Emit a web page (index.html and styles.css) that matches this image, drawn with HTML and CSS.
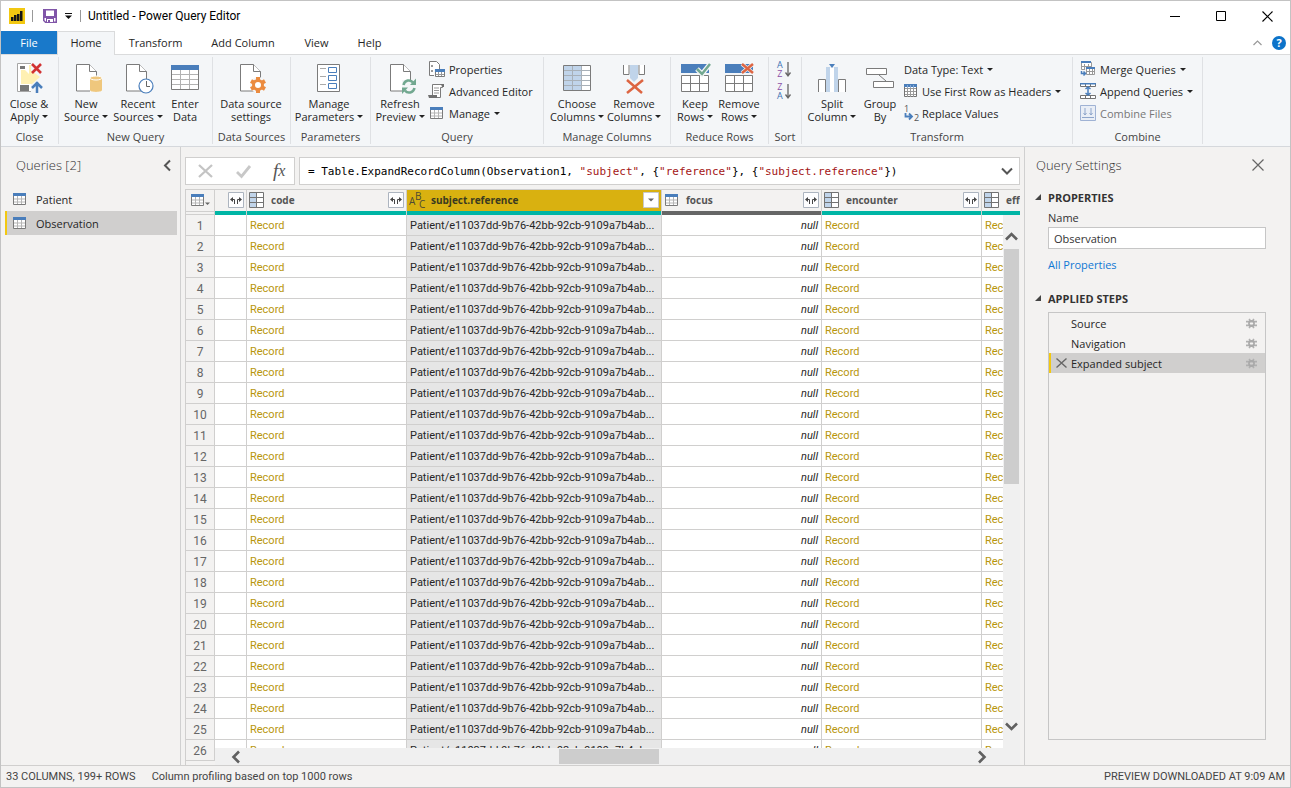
FILE: index.html
```html
<!DOCTYPE html>
<html lang="en">
<head>
<meta charset="utf-8">
<title>Untitled - Power Query Editor</title>
<link rel="stylesheet" href="styles.css">
</head>
<body>
<svg class="sprite" aria-hidden="true">
  <symbol id="page" viewBox="0 0 32 32"><path d="M6.500 2.500h13l7 7v19.500h-20z" fill="#fff" stroke="#7b7b7b"/><path d="M19.500 2.500v7h7" fill="#fff" stroke="#7b7b7b"/></symbol>
  <symbol id="table" viewBox="0 0 14 12"><path d="M.5.5h12v11H.5z" fill="#fff" stroke="#7b7b7b"/><path d="M1 6h11M1 9h11M4.500 3v8M8.500 3v8" stroke="#b5b5b5" fill="none"/><path d="M0 0h13v3H0z" fill="#4a7ebb"/></symbol>
  <symbol id="record" viewBox="0 0 16 16"><path d="M.5.500h14v15H.5z" fill="#fff"/><path d="M1 1h6v14H1z" fill="#c0d4ea"/><path d="M.5.500h14v15H.5zM7.500 0v16M0 5.500h15M0 10.500h15" stroke="#737373" fill="none"/></symbol>
  <symbol id="expand" viewBox="0 0 16 16"><path d="M.5.500h15v15H.5z" fill="#fdfdfe" stroke="#acb4bf"/><path d="M6.500 12V7.500H4M9.500 12V7.500H12" stroke="#444" fill="none"/><path d="M5 5v5L2 7.500zM11 5v5l3-2.500z" fill="#444"/></symbol>
  <symbol id="gear" viewBox="0 0 12 12"><path d="M3.500 1 5 4M8.500 1 7 4M3.500 11 5 8M8.500 11 7 8M0 4h12M0 8h12" stroke="#b0b0b0" stroke-width="1.800"/><circle cx="6" cy="6" r="2.800" fill="none" stroke="#a9a9a9" stroke-width="1.800"/></symbol>
</svg>
<div class="window">
  <header class="titlebar">
    <svg class="logo" width="16" height="16"><path d="M0 0h16v16H0z" fill="#f2c811"/><path d="M2 9h2.500v4H2zM5 7h2.500v6H5zM8 6h2.500v7H8zM11 3h2.500v10H11z" fill="#161616"/></svg>
    <span class="rule"></span>
    <button class="plain" aria-label="Save"><svg width="14" height="14"><path d="M.75.750h12.500v12.500H2.500L.75 11.500z" fill="#fff" stroke="#8055a8" stroke-width="1.500"/><path d="M1 1h2v6.500H1zM11 1h2v6.500h-2zM1 7h12v2H1zM3 9h8v5H3z" fill="#8055a8"/><path d="M4 10h6v3H4z" fill="#fff"/><path d="M5 11h2v2H5z" fill="#8055a8"/></svg></button>
    <button class="plain quick" aria-label="Customize toolbar"><svg width="7" height="6"><path d="M0 .5h7" stroke="#111"/><path d="M0 2.500h7L3.500 6z" fill="#111"/></svg></button>
    <span class="rule"></span>
    <h1>Untitled - Power Query Editor</h1>
    <div class="wincontrols">
      <button class="plain" aria-label="Minimize"><svg width="11" height="11"><path d="M0 5.500h10" stroke="#000"/></svg></button>
      <button class="plain" aria-label="Maximize"><svg width="11" height="11"><path d="M.5.500h9v9h-9z" fill="none" stroke="#000"/></svg></button>
      <button class="plain" aria-label="Close"><svg width="11" height="11"><path d="m.5.500 10 10M10.500.500l-10 10" stroke="#000" stroke-width="1.100"/></svg></button>
    </div>
  </header>
  <nav class="tabs">
    <button class="tab file">File</button><button class="tab active">Home</button><button class="tab transform">Transform</button><button class="tab add">Add Column</button><button class="tab short">View</button><button class="tab short">Help</button>
    <div class="help">
      <button class="plain" aria-label="Collapse ribbon"><svg width="9" height="6"><path d="M.5 5 4.500 1l4 4" fill="none" stroke="#999" stroke-width="1.200"/></svg></button>
      <button class="plain helpmark" aria-label="Help">?</button>
    </div>
  </nav>
  <section class="ribbon" aria-label="Home">
    <div class="group g-close"><div class="tools">
      <button class="big w56"><svg class="icon" width="32" height="32"><path d="M4.500 1.500h22v28h-22z" fill="#fff" stroke="#a6a6a6"/><path d="M8 8h4l4 4v-9h10v13l-6 6H8z" fill="#fff0b3"/><path d="M7 4h5v3H7zM7 23h9v6H7z" fill="#787878"/><path d="M18 0h10v31h-10z" fill="#f4f6f8"/><path d="M16 9h3l8 6-8 7h-3z" fill="#fff0b3"/><path d="m19 2 9 9M28 2l-9 9" stroke="#d13232" stroke-width="2.600"/><path d="M24 31V20m-5 6 5-5 5 5" fill="none" stroke="#4a7ebb" stroke-width="2.500"/></svg>Close &amp;<br>Apply <i class="caret"></i></button>
    </div><h2>Close</h2></div>
    <div class="group g-new"><div class="tools">
      <button class="big w54"><svg class="icon" width="32" height="32"><use href="#page"/><path d="M20 15h13v16H20z" fill="#f4f6f8"/><path d="M20 16v12c0 2.500 12 2.500 12 0V16z" fill="#efc77d"/><ellipse cx="26" cy="16" rx="6" ry="2" fill="#efc77d" stroke="#fff"/></svg>New<br>Source <i class="caret"></i></button>
      <button class="big w50"><svg class="icon" width="32" height="32"><use href="#page" x="-2"/><circle cx="24" cy="24" r="7" fill="#fff" stroke="#4a7ebb" stroke-width="1.200"/><path d="M24.500 19v5.500H28" stroke="#666" fill="none"/></svg>Recent<br>Sources <i class="caret"></i></button>
      <button class="big w44"><svg class="icon" width="32" height="32"><path d="M2.500 3.500h27v24h-27z" fill="#fff" stroke="#7b7b7b"/><path d="M3 12.500h26M3 17.500h26M3 22.500h26M11.500 8v19M20.500 8v19" stroke="#b2b2b2"/><path d="M2 3h28v5H2z" fill="#4a7ebb"/></svg>Enter<br>Data</button>
    </div><h2>New Query</h2></div>
    <div class="group g-data"><div class="tools">
      <button class="big w76"><svg class="icon" width="32" height="32"><use href="#page" x="-1"/><circle cx="23" cy="23" r="8" fill="#f4f6f8"/><g stroke="#eb8b3f" stroke-width="4"><path d="M23 15v16M16 19l14 8M16 27l14-8"/></g><circle cx="23" cy="23" r="4.500" fill="#fff" stroke="#eb8b3f" stroke-width="3"/></svg>Data source<br>settings</button>
    </div><h2>Data Sources</h2></div>
    <div class="group g-params"><div class="tools">
      <button class="big w76"><svg class="icon" width="32" height="32"><path d="M4.500 2.500h22v27h-22z" fill="#fff" stroke="#7b7b7b"/><path d="M7 6.500h6M7 14.500h6M7 22.500h6" stroke="#aaa"/><path d="M15.500 5.500h8v5h-8zM15.500 13.500h8v5h-8zM15.500 21.500h8v5h-8z" fill="#fff" stroke="#4a7ebb"/></svg>Manage<br>Parameters <i class="caret"></i></button>
    </div><h2>Parameters</h2></div>
    <div class="group g-query"><div class="tools">
      <button class="big w56"><svg class="icon" width="32" height="32"><use href="#page" x="0"/><path d="M18 18h14v14H18z" fill="#f4f6f8"/><path d="M19.500 23c1-5 7-6 9.500-2.500M30.500 26c-1 5-7 6-9.500 2.500" fill="none" stroke="#72a890" stroke-width="2.500"/><path d="M32 16.500V23h-6zM18 32v-6.500h6z" fill="#72a890"/></svg>Refresh<br>Preview <i class="caret"></i></button>
      <div class="smalls">
        <button class="small"><svg width="17" height="16"><path d="M1.500.500h7l3 3v11h-10z" fill="#fff" stroke="#7b7b7b"/><path d="M3 4h2v2H3zM3 9h2v2H3z" fill="#999"/><path d="M6 8h11v8H6z" fill="#f4f6f8"/><path d="M7.500 8.500h9v7h-9z" fill="#fff" stroke="#7b7b7b"/><path d="M8 13.500h8M10.500 11v4M13.500 11v4" stroke="#999"/><path d="M7 8h10v3H7z" fill="#4a7ebb"/></svg>Properties</button>
        <button class="small"><svg width="17" height="16"><path d="M4.500 1.500h10v3h-2v10h-8z" fill="#fff" stroke="#7b7b7b"/><path d="M6 5h5M6 7.500h5M6 10h5" stroke="#999"/><path d="M0 12h9v3H1zM13 1h3v3h-2z" fill="#707070"/></svg>Advanced Editor</button>
        <button class="small"><svg width="17" height="12"><use href="#table" x="2" width="14" height="12"/></svg>Manage <i class="caret"></i></button>
      </div>
    </div><h2>Query</h2></div>
    <div class="group g-columns"><div class="tools">
      <button class="big w58"><svg class="icon" width="32" height="32"><path d="M2.500 3.500h27v25h-27z" fill="#fff"/><path d="M3 4h17v24H3z" fill="#c0d4ea"/><path d="M3 8.500h26M3 13.500h26M3 18.500h26M3 23.500h26M11.500 4v24M20.500 4v24" stroke="#a8b0b8"/><path d="M2.500 3.500h27v25h-27z" fill="none" stroke="#7b7b7b"/></svg>Choose<br>Columns <i class="caret"></i></button>
      <button class="big w56"><svg class="icon" width="32" height="32"><path d="M5.500 3v9.500H11V3M26.500 3v9.500H21V3" fill="#fff" stroke="#7b7b7b"/><path d="M12 3h8v13l-4 4-4-4z" fill="#c0d4ea"/><path d="m9 18 15 13M25 18 9 31" stroke="#dd6542" stroke-width="2.500"/></svg>Remove<br>Columns <i class="caret"></i></button>
    </div><h2>Manage Columns</h2></div>
    <div class="group g-rows"><div class="tools">
      <button class="big w44"><svg class="icon" width="32" height="32"><path d="M2 2h28v9H2z" fill="#4a7ebb"/><path d="M2.500 13.500h27v16h-27zM2 21.500h28M11.500 14v16M20.500 14v16" fill="#fff" stroke="#7b7b7b"/><path d="m18 7 5 5 8-10" fill="none" stroke="#f4f6f8" stroke-width="5"/><path d="m18 7 5 5 8-10" fill="none" stroke="#72a890" stroke-width="2.500"/></svg>Keep<br>Rows <i class="caret"></i></button>
      <button class="big w44"><svg class="icon" width="32" height="32"><path d="M2 2h28v9H2z" fill="#4a7ebb"/><path d="M2.500 13.500h27v16h-27zM2 21.500h28M11.500 14v16M20.500 14v16" fill="#fff" stroke="#7b7b7b"/><path d="m19 2 11 9M30 2l-11 9" stroke="#f4f6f8" stroke-width="4"/><path d="m19 2 11 9M30 2l-11 9" stroke="#dd6542" stroke-width="2.500"/></svg>Remove<br>Rows <i class="caret"></i></button>
    </div><h2>Reduce Rows</h2></div>
    <div class="group g-sort"><div class="tools sorts">
      <button class="plain" aria-label="Sort ascending"><span class="az"><b class="a">A</b><b class="z">Z</b></span><svg width="6" height="15"><path d="M3 0v14M.5 10.500 3 14l2.500-3.500" fill="none" stroke="#666" stroke-width="1.300"/></svg></button>
      <button class="plain" aria-label="Sort descending"><span class="az"><b class="z">Z</b><b class="a">A</b></span><svg width="6" height="15"><path d="M3 0v14M.5 10.500 3 14l2.500-3.500" fill="none" stroke="#666" stroke-width="1.300"/></svg></button>
    </div><h2>Sort</h2></div>
    <div class="group g-transform"><div class="tools">
      <button class="big w50"><svg class="icon" width="32" height="32"><path d="M2.500 30V17.500h7V30M22.500 30V17.500h7V30" fill="#fff" stroke="#7b7b7b"/><path d="M10 6h12v24H10z" fill="#fff"/><path d="M10 5h4v25h-4zM18 5h4v25h-4z" fill="#c0d4ea"/><path d="M13 2h6l-3 4z" fill="#4a7ebb"/></svg>Split<br>Column <i class="caret"></i></button>
      <button class="big w46"><svg class="icon" width="32" height="32"><path d="M2.500 6.500h20v6h-20zM9.500 19.500h20v6h-20z" fill="#fff" stroke="#7b7b7b"/><path d="m15 13 7 6" stroke="#7b7b7b"/></svg>Group<br>By</button>
      <div class="smalls">
        <button class="small">Data Type: Text <i class="caret"></i></button>
        <button class="small"><svg width="14" height="14"><path d="M.5.500h12v12H.5z" fill="#fff" stroke="#737373"/><path d="M1 4.500h11M1 7.500h11M1 10.500h11M3.500 4v9M6.500 4v9M9.500 4v9" stroke="#999"/><path d="M0 0h13v3H0z" fill="#4a7ebb"/><path d="M3.500 1v3M6.500 1v3M9.500 1v3" stroke="#86a9d4"/></svg>Use First Row as Headers <i class="caret"></i></button>
        <button class="small"><svg width="14" height="16" class="replace"><text x="0" y="7">1</text><text x="10" y="16">2</text><path d="M1.500 8v3.500H7M5 8.500 8 11.500 5 14.500" fill="none" stroke="#4a7ebb" stroke-width="1.800"/></svg>Replace Values</button>
      </div>
    </div><h2>Transform</h2></div>
    <div class="group g-combine"><div class="tools">
      <div class="smalls">
        <button class="small"><svg width="16" height="16"><path d="M1.500 1.500h10v7h-10zM1 5.500h10M4.500 3v6M8.500 3v6" fill="#fff" stroke="#999"/><path d="M1 0h10v2H1z" fill="#4a7ebb"/><path d="M5 6h10v10H5z" fill="#f4f6f8"/><path d="M6.500 7.500h8v6h-8zM6 10.500h9M9.500 8v6M12.500 8v6" fill="#fff" stroke="#999"/><path d="M6 6h9v2H6z" fill="#4a7ebb"/><path d="M1.500 10v2.500H5M3.500 10.500l2 2-2 2" fill="none" stroke="#4a7ebb" stroke-width="1.500"/></svg>Merge Queries <i class="caret"></i></button>
        <button class="small"><svg width="16" height="16"><path d="M.5.500h15v3H.5zM.5 12.500h15v3H.5zM5.500 1v2M10.500 1v2M5.500 13v2M10.500 13v2" fill="#fff" stroke="#737373"/><path d="M0 0h16v1.500H0z" fill="#4a7ebb"/><path d="M8 4v8M5.500 6 8 4l2.500 2M5.500 10 8 12l2.500-2" fill="none" stroke="#4a7ebb" stroke-width="1.500"/></svg>Append Queries <i class="caret"></i></button>
        <button class="small" disabled><svg width="16" height="16"><path d="M.5.500h15v15H.5z" fill="#e9eef6" stroke="#9fb2d4"/><path d="M2 12.500h12M5 3v7M3.500 8 5 10l1.500-2M11 3v7M9.500 8l1.500 2 1.500-2" fill="none" stroke="#8fa6cb"/></svg>Combine Files</button>
      </div>
    </div><h2>Combine</h2></div>
  </section>
  <main class="workspace">
    <aside class="queries">
      <div class="panelhead"><h2>Queries [2]</h2><button class="plain" aria-label="Collapse queries"><svg width="8" height="11"><path d="M7 .5 2 5.500l5 5" fill="none" stroke="#555" stroke-width="2"/></svg></button></div>
      <button class="query"><svg width="14" height="12"><use href="#table"/></svg>Patient</button>
      <button class="query selected"><svg width="14" height="12"><use href="#table"/></svg>Observation</button>
    </aside>
    <section class="editor">
      <div class="formula">
        <div class="actions">
          <button class="plain" aria-label="Cancel"><svg width="16" height="14"><path d="m1 1 13 12M14 1 1 13" stroke="#c4c4c4" stroke-width="2.300"/></svg></button>
          <button class="plain" aria-label="Apply"><svg width="15" height="13"><path d="m1 7 4.500 4.500L14 1" fill="none" stroke="#c8c8c8" stroke-width="2.800"/></svg></button>
          <button class="plain fx" aria-label="Insert step">f<small>x</small></button>
        </div>
        <div class="code"><code>= Table.ExpandRecordColumn(Observation1, <q>"subject"</q>, {<q>"reference"</q>}, {<q>"subject.reference"</q>})</code><button class="plain" aria-label="Expand formula bar"><svg width="12" height="8"><path d="m1 1.500 5 5 5-5" fill="none" stroke="#555" stroke-width="2"/></svg></button></div>
      </div>
      <div class="grid">
        <table>
          <colgroup><col class="c-num"><col class="c-cut"><col class="c-mid"><col class="c-subject"><col class="c-mid"><col class="c-mid"><col class="c-mid"></colgroup>
          <thead><tr>
            <th class="corner"><div class="head"><svg width="20" height="12"><use href="#table" width="14" height="12"/><path d="M14 8.500h5L16.500 11z" fill="#666"/></svg></div><div class="bar none"></div></th>
            <th><div class="head"><span class="name"></span><svg width="16" height="16"><use href="#expand"/></svg></div><div class="bar"></div></th>
            <th><div class="head"><svg width="16" height="16"><use href="#record"/></svg><span class="name">code</span><svg width="16" height="16"><use href="#expand"/></svg></div><div class="bar"></div></th>
            <th class="chosen"><div class="head"><svg width="16" height="16" class="abc"><text x="0" y="13">A</text><text x="6" y="8">B</text><text x="10" y="16">C</text></svg><span class="name">subject.reference</span><svg width="16" height="16"><path d="M.5.500h15v15H.5z" fill="#fff" stroke="#c9c9c9"/><path d="M5 6.500h6L8 9.500z" fill="#666"/></svg></div><div class="bar"></div></th>
            <th><div class="head"><svg width="16" height="12"><use href="#table" width="14" height="12" x="1"/></svg><span class="name">focus</span><svg width="16" height="16"><use href="#expand"/></svg></div><div class="bar gray"></div></th>
            <th><div class="head"><svg width="16" height="16"><use href="#record"/></svg><span class="name">encounter</span><svg width="16" height="16"><use href="#expand"/></svg></div><div class="bar"></div></th>
            <th><div class="head"><svg width="16" height="16"><use href="#record"/></svg><span class="name">effective</span></div><div class="bar"></div></th>
          </tr></thead>
          <tbody id="rows"></tbody>
        </table>
        <div class="vscroll"><svg width="13" height="9"><path d="m1 7.500 5.500-5.500 5.500 5.500" fill="none" stroke="#606060" stroke-width="2.600"/></svg><div class="thumb"></div><svg width="13" height="9"><path d="m1 1.500 5.500 5.500 5.500-5.500" fill="none" stroke="#606060" stroke-width="2.600"/></svg></div>
        <div class="hscroll"><svg width="10" height="12"><path d="M8 .5 2.500 6 8 11.500" fill="none" stroke="#606060" stroke-width="2.600"/></svg><div class="thumb"></div><svg width="10" height="12"><path d="M2 .5 7.500 6 2 11.500" fill="none" stroke="#606060" stroke-width="2.600"/></svg></div>
      </div>
    </section>
    <aside class="settings">
      <div class="panelhead"><h2>Query Settings</h2><button class="plain" aria-label="Close settings"><svg width="12" height="12"><path d="m.5.500 11 11M11.500.500l-11 11" stroke="#666" stroke-width="1.200"/></svg></button></div>
      <h3 class="first"><svg width="6" height="6"><path d="M6 0v6H0z" fill="#444"/></svg>PROPERTIES</h3>
      <label for="name">Name</label>
      <input id="name" type="text" value="Observation">
      <a href="#all">All Properties</a>
      <h3><svg width="6" height="6"><path d="M6 0v6H0z" fill="#444"/></svg>APPLIED STEPS</h3>
      <ul class="steps">
        <li><span>Source</span><svg width="11" height="11"><use href="#gear"/></svg></li>
        <li><span>Navigation</span><svg width="11" height="11"><use href="#gear"/></svg></li>
        <li class="selected"><svg width="11" height="10"><path d="m.5.500 10 9M10.500.500l-10 9" stroke="#666" stroke-width="1.400"/></svg><span>Expanded subject</span><svg width="11" height="11"><use href="#gear"/></svg></li>
      </ul>
    </aside>
  </main>
  <footer class="status"><span>33 COLUMNS, 199+ ROWS</span><span>Column profiling based on top 1000 rows</span><span class="preview">PREVIEW DOWNLOADED AT 9:09 AM</span></footer>
</div>
<script src="script.js"></script>
</body>
</html>
```
FILE: styles.css
```css
* { box-sizing: border-box; }
body { margin: 0; font: 11px/13px "Open Sans", "Noto Sans", sans-serif; color: #262626; }
h1, h2, h3, ul { margin: 0; padding: 0; font-size: inherit; font-weight: 400; list-style: none; }
button { font: inherit; color: inherit; background: none; border: 0; padding: 0; margin: 0; }
svg { display: block; flex: none; overflow: visible; }
.sprite { position: absolute; width: 0; height: 0; }
.plain { display: flex; align-items: center; justify-content: center; }
.window { height: 100vh; display: flex; flex-direction: column; border: 1px solid #c3c3c3; background: #fff; }

.titlebar { display: flex; align-items: center; height: 30px; flex: none; padding-left: 8px; }
.titlebar .rule { width: 1px; height: 12px; background: #999; margin: 0 10px 0 7px; }
.titlebar .quick { margin-left: 8px; }
.titlebar .quick + .rule { margin: 0 7px 0 8px; }
.titlebar h1 { font: 12px/16px Roboto, sans-serif; color: #000; flex: 1; }
.wincontrols { display: flex; }
.wincontrols button { width: 46px; height: 30px; }

.tabs { display: flex; height: 24px; flex: none; border-bottom: 1px solid #dadbdc; }
.tab { height: 23px; text-align: center; }
.tab.file { width: 56px; background: #1979ca; color: #fff; }
.tab.active { width: 58px; height: 24px; background: #f4f6f8; border: 1px solid #dadbdc; border-bottom: 0; padding-bottom: 2px; }
.tab.transform { width: 81px; }
.tab.add { width: 94px; }
.tab.short { width: 53px; }
.help { margin-left: auto; display: flex; align-items: center; gap: 10px; padding-right: 4px; }
.helpmark { width: 14px; height: 14px; border-radius: 50%; background: #0d73c9; color: #fff; font-weight: 700; }

.ribbon { display: flex; flex: none; height: 92px; padding: 2px 0; background: #f4f6f8; border-bottom: 1px solid #d5d8dc; }
.group { display: flex; flex-direction: column; border-right: 1px solid #dfe1e4; flex: none; }
.group h2 { text-align: center; line-height: 15px; color: #444; }
.tools { display: flex; align-items: flex-start; height: 73px; padding-top: 1px; }
.big { display: block; text-align: center; padding-top: 4px; white-space: nowrap; }
.big .icon { margin: 0 auto 3px; }
.w44 { width: 44px; } .w46 { width: 46px; } .w50 { width: 50px; } .w54 { width: 54px; }
.w56 { width: 56px; } .w58 { width: 58px; } .w76 { width: 76px; }
.caret { display: inline-block; border: 3px solid transparent; border-top-color: #222; border-bottom: 0; vertical-align: 3px; }
.smalls { display: flex; flex-direction: column; }
.small { display: flex; align-items: center; gap: 4px; height: 22px; white-space: nowrap; }
.small:disabled { color: #777; }
.g-close { width: 58px; }
.g-new { width: 154px; }
.g-data { width: 78px; }
.g-params { width: 80px; }
.g-query { width: 173px; }
.g-query .tools { padding-left: 1px; }
.g-columns { width: 127px; }
.g-columns .tools { padding-left: 4px; }
.g-rows { width: 98px; }
.g-rows .tools { padding-left: 2px; }
.g-sort { width: 33px; }
.g-transform { width: 271px; }
.g-transform .tools { padding-left: 5px; }
.g-transform .smalls { padding-left: 1px; }
.g-combine { width: 130px; }
.g-combine .tools { padding-left: 7px; }
.g-sort .sorts { flex-direction: column; padding-left: 8px; }
.sorts button { height: 22px; gap: 2px; }
.az { display: flex; flex-direction: column; font: 9px/9px "Open Sans", sans-serif; }
.az b { font-weight: 400; }
.az .a { color: #3d72b4; }
.az .z { color: #8b4fa8; }
.replace text { font: 9px "Open Sans", sans-serif; fill: #555; }

.workspace { display: flex; flex: 1; min-height: 0; background: #f3f2f1; }
.panelhead { display: flex; align-items: center; justify-content: space-between; height: 36px; }
.panelhead h2 { font-size: 13px; font-weight: 300; line-height: 18px; color: #333; }
.queries { width: 180px; flex: none; padding: 0 3px 0 4px; border-right: 1px solid #d0d0d0; }
.queries .panelhead { padding: 0 6px 0 11px; margin-bottom: 4px; }
.query { display: flex; align-items: center; gap: 9px; width: 100%; height: 24px; padding-left: 6px; border-left: 2px solid transparent; }
.selected { background: #d0cfce; border-color: #f2c811; }

.editor { flex: 1; min-width: 0; display: flex; flex-direction: column; padding: 10px 4px 0; }
.formula { display: flex; gap: 4px; height: 28px; margin-bottom: 4px; flex: none; }
.actions, .code { display: flex; align-items: center; background: #fff; border: 1px solid #d0cfce; }
.actions { width: 110px; padding-left: 12px; gap: 22px; }
.fx { font: italic 19px/20px "Liberation Serif", serif; color: #555; }
.fx small { font-size: 16px; }
.code { flex: 1; min-width: 0; justify-content: space-between; padding: 0 6px 0 8px; }
code { font: 11px/18px "DejaVu Sans Mono", monospace; color: #000; white-space: nowrap; padding-top: 1px; }
q { quotes: none; color: #a31515; }

.grid { flex: 1; min-height: 0; position: relative; overflow: hidden; border: 1px solid #d0cfce; border-width: 1px 0 0 1px; }
table { width: 955px; table-layout: fixed; border-collapse: separate; border-spacing: 0; font: 11px/18px Roboto, sans-serif; }
.c-num { width: 29px; } .c-cut { width: 32px; } .c-mid { width: 160px; } .c-subject { width: 255px; }
th, td { padding: 0; border-right: 1px solid #d0cfce; text-align: left; }
.head { display: flex; align-items: center; height: 21px; padding: 0 2px 2px; }
.name { flex: 1; padding-left: 6px; color: #555; font: 700 10px/14px "Open Sans", sans-serif; }
.corner .head { padding-left: 5px; }
.bar { height: 4px; background: #00b5a5; }
.bar.none { background: none; border: 1px solid #d0cfce; border-width: 1px 0; }
.bar.gray { background: #666; }
.chosen .head { background: #d9b110; }
.chosen .name { color: #3a3a20; }
.abc text { font: 10px "Open Sans", sans-serif; fill: #4d4a35; }
td { height: 21px; padding: 2px 3px 0; border-bottom: 1px solid #d0cfce; background: #fff; color: #b8960c; white-space: nowrap; overflow: hidden; }
td.num { background: #f3f2f1; color: #666; text-align: center; font-size: 12px; padding: 2px 0 0; }
td.ref { background: #e6e6e6; color: #262626; }
td.null { color: #262626; text-align: right; font-style: italic; }
.vscroll, .hscroll { position: absolute; display: flex; align-items: center; background: #f0f0f0; }
.vscroll { flex-direction: column; top: 25px; right: 0; bottom: 0; width: 17px; padding: 17px 0 34px; }
.vscroll .thumb { width: 15px; flex: 0 0 47%; margin: 8px 0 auto; background: #cdcdcd; }
.hscroll { left: 29px; right: 17px; bottom: 0; height: 17px; padding: 0 16px; }
.hscroll .thumb { height: 15px; width: 100px; margin: 0 auto 0 42%; background: #cdcdcd; }

.settings { width: 266px; flex: none; display: flex; flex-direction: column; padding: 0 24px 25px 23px; border-left: 1px solid #d0d0d0; color: #333; }
.settings .panelhead { margin-left: -12px; padding-right: 2px; }
.settings h3 { display: flex; align-items: center; gap: 7px; height: 22px; margin: 16px 0 3px -13px; font-weight: 700; }
.settings h3.first { margin: 3px 0 0 -13px; }
.settings label { height: 19px; line-height: 19px; }
.settings input { height: 22px; width: 100%; padding: 0 5px; border: 1px solid #c6c6c6; background: #fff; font: inherit; color: #333; }
.settings a { margin-top: 9px; color: #0f78d4; text-decoration: none; }
.steps { flex: 1; border: 1px solid #c6c6c6; }
.steps li { display: flex; align-items: center; height: 20px; padding-right: 8px; border-left: 2px solid transparent; }
.steps li.selected { border-color: #f2c811; padding-left: 5px; }
.steps span { flex: 1; padding-left: 20px; color: #262626; }
.steps .selected span { padding-left: 4px; }

.status { display: flex; align-items: center; gap: 16px; flex: none; height: 22px; padding: 0 5px; border-top: 1px solid #d0cfce; background: #f3f2f1; font: 11px/14px Roboto, sans-serif; color: #444; }
.preview { margin-left: auto; }
```
FILE: script.js
```js
const cells = [
  ["", ""],
  ["", "Record"],
  ["ref", "Patient/e11037dd-9b76-42bb-92cb-9109a7b4ab..."],
  ["null", "null"],
  ["", "Record"],
  ["", "Record"]
];
const body = document.getElementById("rows");
for (let n = 1; n <= 26; n++) {
  const row = body.insertRow();
  const num = row.insertCell();
  num.className = "num";
  num.textContent = n;
  for (const [kind, text] of cells) {
    const cell = row.insertCell();
    cell.className = kind;
    cell.textContent = text;
  }
}
```
